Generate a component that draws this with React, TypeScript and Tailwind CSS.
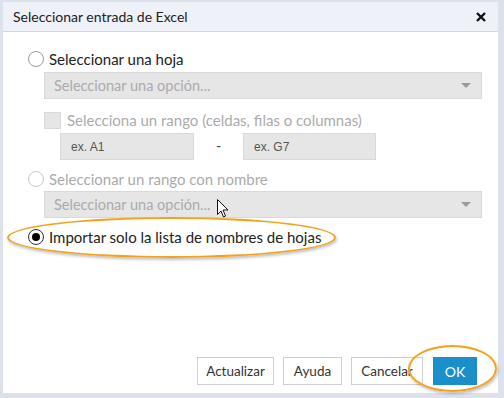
function Radio({ checked, disabled }: { checked?: boolean; disabled?: boolean }) {
  return (
    <span
      className={`flex h-[16px] w-[16px] shrink-0 items-center justify-center rounded-full border bg-white ${
        checked ? "border-[#333]" : disabled ? "border-[#c8c8c8]" : "border-[#9a9a9a]"
      }`}
    >
      {checked && <span className="h-[8px] w-[8px] rounded-full bg-black" />}
    </span>
  );
}

function Select() {
  return (
    <div className="ml-[16px] flex h-[27px] items-center justify-between border border-[#d9d9d9] bg-[#e6e6e6] pl-[9px] pr-[10px] text-[14.5px] text-[#ababab]">
      <span>Seleccionar una opción...</span>
      <span className="h-0 w-0 border-x-[5px] border-t-[5px] border-x-transparent border-t-[#9a9a9a]" />
    </div>
  );
}

export default function App() {
  return (
    <div
      className="relative flex h-[398px] w-[504px] flex-col border-b-[5px] border-l-[3px] border-r-[6px] border-t-[2px] border-[#dde2ea] text-[#222]"
      style={{ fontFamily: "Lato, 'Noto Sans', sans-serif" }}
    >
      <div className="flex h-[30px] shrink-0 items-center justify-between border-b border-[#d0d6e0] bg-[#eef1f7] pl-[10px] pr-[12px]">
        <span className="text-[14px] text-[#222]">Seleccionar entrada de Excel</span>
        <svg width="10" height="10" viewBox="0 0 10 10">
          <path d="M1 1L9 9M9 1L1 9" stroke="#111" strokeWidth="2.4" />
        </svg>
      </div>

      <div className="flex flex-1 flex-col bg-white pl-[25px] pr-[16px] pt-[17px]">
        <div className="flex h-[20px] items-center gap-[5px] text-[15px]">
          <Radio />
          <span>Seleccionar una hoja</span>
        </div>
        <div className="mt-[3px]">
          <Select />
        </div>
        <div className="ml-[16px] mt-[12px] flex h-[18px] items-center gap-[6px] text-[15px] text-[#ababab]">
          <span className="h-[17px] w-[17px] border border-[#d9d9d9] bg-[#e6e6e6]" />
          <span>Selecciona un rango (celdas, filas o columnas)</span>
        </div>
        <div
          className="ml-[32px] mt-[4px] flex h-[27px] items-center text-[12px] text-[#555]"
          style={{ fontFamily: "'Liberation Sans', Arial, sans-serif" }}
        >
          <div className="flex h-full w-[134px] items-center border border-[#d9d9d9] bg-[#e6e6e6] pl-[10px]">ex. A1</div>
          <span className="w-[49px] text-center text-[14px] text-[#444]">-</span>
          <div className="flex h-full w-[133px] items-center border border-[#d9d9d9] bg-[#e6e6e6] pl-[10px]">ex. G7</div>
        </div>
        <div className="mt-[9px] flex h-[20px] items-center gap-[5px] text-[15px] text-[#ababab]">
          <Radio disabled />
          <span>Seleccionar un rango con nombre</span>
        </div>
        <div className="mt-[2px]">
          <Select />
        </div>
        <div className="mt-[9px] flex h-[20px] items-center gap-[5px] text-[15px]">
          <Radio checked />
          <span>Importar solo la lista de nombres de hojas</span>
        </div>

        <div className="mt-auto mb-[8px] flex justify-end gap-[9px] text-[13.5px] text-[#333]">
          <button className="h-[28px] w-[77px] border border-[#cfcfcf] bg-white">Actualizar</button>
          <button className="h-[28px] w-[59px] border border-[#cfcfcf] bg-white">Ayuda</button>
          <button className="h-[28px] w-[72px] border border-[#cfcfcf] bg-white">Cancelar</button>
          <button className="ml-[1px] mr-[5px] h-[28px] w-[44px] bg-[#1a8fc9] text-[14px] text-white">OK</button>
        </div>
      </div>

      {/* highlight ellipses */}
      <div className="pointer-events-none absolute left-[4px] top-[215px] h-[41px] w-[329px] rounded-[50%] border-[2.5px] border-[#f2a31c] shadow-[1px_2px_3px_rgba(0,0,0,0.25)]" />
      <div className="pointer-events-none absolute left-[405px] top-[343px] h-[47px] w-[89px] rounded-[50%] border-[2.5px] border-[#f2a31c] shadow-[1px_2px_3px_rgba(0,0,0,0.25)]" />

      {/* mouse pointer */}
      <svg className="absolute left-[214px] top-[197px]" width="12" height="19" viewBox="0 0 12 19">
        <path d="M0.5 0.5V15.5L4 12L6.5 18L8.5 17L6 11H11Z" fill="white" stroke="#111" strokeWidth="1" strokeLinejoin="round" />
      </svg>
    </div>
  );
}
